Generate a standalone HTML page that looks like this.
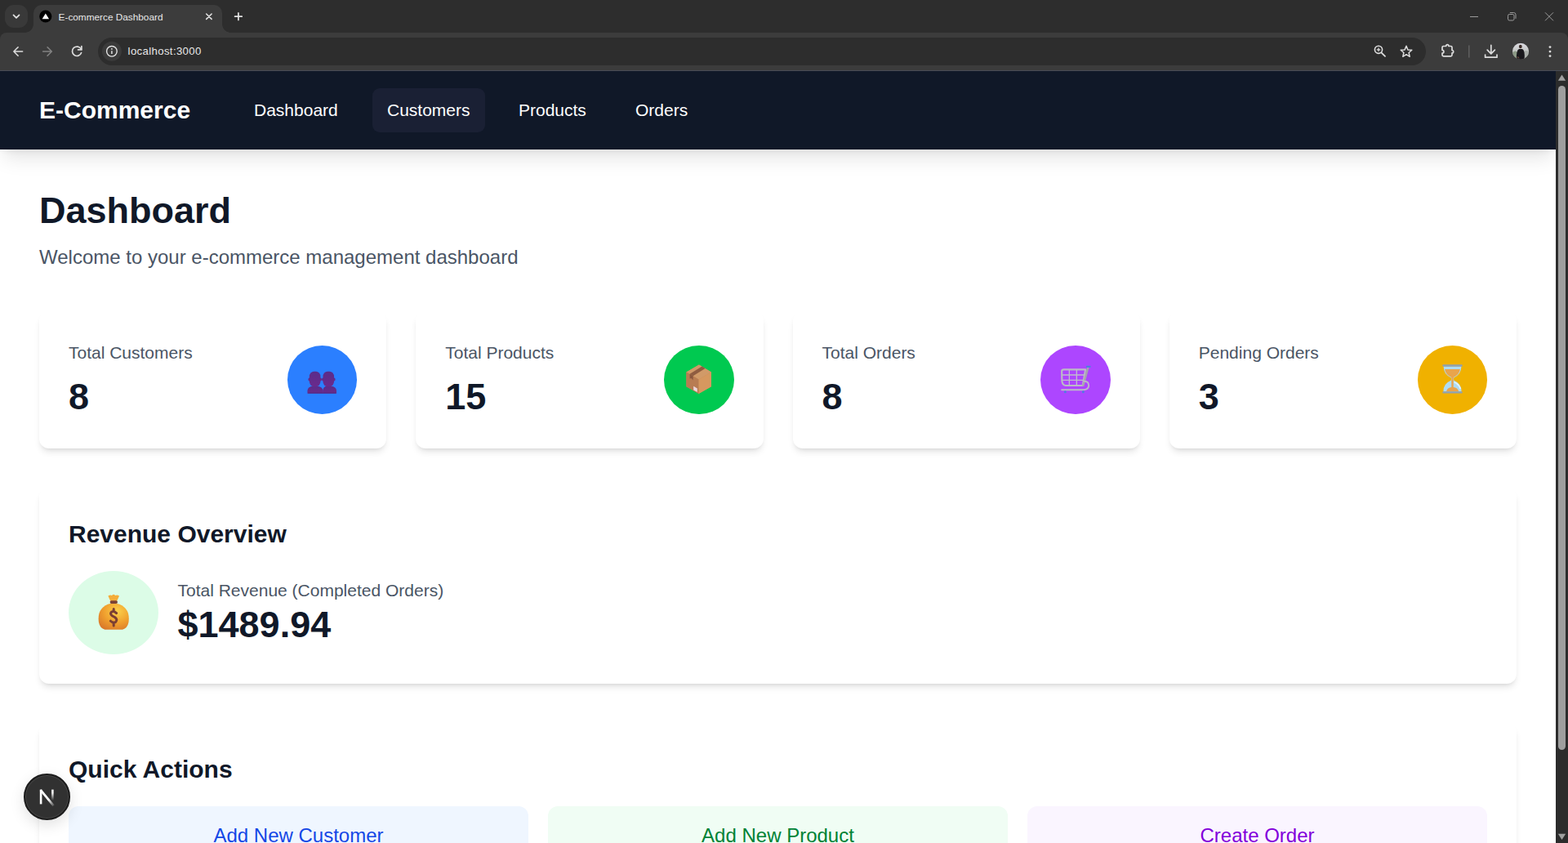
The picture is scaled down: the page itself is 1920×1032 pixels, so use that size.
<!DOCTYPE html>
<html lang="en">
<head>
<meta charset="utf-8">
<title>E-commerce Dashboard</title>
<style>
*{box-sizing:border-box;margin:0;padding:0}
html,body{width:1920px;height:1032px;overflow:hidden;background:#fff}
body{font-family:"Liberation Sans",Arial,Helvetica,sans-serif;color:#101828;position:relative}
/* ---------- browser chrome ---------- */
#chrome{position:absolute;left:0;top:0;width:1920px;height:87px;background:#2d2d2d;font-family:"Liberation Sans","DejaVu Sans",sans-serif}
#tabsearch{position:absolute;left:6px;top:6px;width:28px;height:28px;border-radius:11px;background:#393939}
#tab{position:absolute;left:41px;top:6px;width:231px;height:34px;background:#3c3c3c;border-radius:10px 10px 0 0}
#tab:before,#tab:after{content:"";position:absolute;bottom:0;width:10px;height:10px}
#tab:before{left:-10px;background:radial-gradient(circle at 0 0,transparent 9.5px,#3c3c3c 10px)}
#tab:after{right:-10px;background:radial-gradient(circle at 100% 0,transparent 9.5px,#3c3c3c 10px)}
#tabtitle{position:absolute;left:30.6px;top:6.9px;font-size:11.8px;line-height:16px;color:#e8e8e8;white-space:nowrap}
#toolbar{position:absolute;left:0;top:40px;width:1920px;height:47px;background:#3c3c3c;border-radius:8px 8px 0 0;border-bottom:1px solid #494c56}
#omni{position:absolute;left:120px;top:6px;width:1626px;height:34px;border-radius:17px;background:#2d2d2d}
#url{position:absolute;left:36.6px;top:8.1px;font-size:13.2px;letter-spacing:.36px;line-height:18px;color:#e8e8e8;white-space:nowrap}
.ci{position:absolute}
/* ---------- page ---------- */
#page{position:absolute;left:0;top:87px;width:1905px;height:945px;overflow:hidden;background:#fff}
#nav{position:absolute;left:0;top:0;width:1905px;height:96px;background:#101828;box-shadow:0 15px 22.5px -4.5px rgba(0,0,0,.1),0 6px 9px -6px rgba(0,0,0,.1)}
#brand{position:absolute;left:48px;top:27px;font-size:30px;line-height:42px;font-weight:700;color:#fff;white-space:nowrap}
.nl{position:absolute;top:21px;height:54px;padding:12px 18px;font-size:21px;line-height:30px;color:#fff;border-radius:9px;white-space:nowrap}
h1{position:absolute;left:48px;top:144px;font-size:45px;line-height:54px;font-weight:700;color:#101828}
#sub{position:absolute;left:48px;top:210px;font-size:24px;line-height:36px;color:#4a5565;white-space:nowrap}
.card{position:absolute;background:#fff;border-radius:12px;box-shadow:0 6.5px 8px -2.5px rgba(0,0,0,.11),0 3px 5px -3px rgba(0,0,0,.1)}
.stat{top:294px;width:425.25px;height:168px}
.stat .lb{position:absolute;left:36px;top:36px;font-size:21px;line-height:30px;color:#4a5565;white-space:nowrap}
.stat .vl{position:absolute;left:36px;top:78px;font-size:45px;line-height:54px;font-weight:700;color:#101828}
.stat .ic{position:absolute;right:36px;top:42px;width:85.5px;height:84px;border-radius:50%}
.stat .ic svg{position:absolute;left:0;top:0;width:100%;height:100%}
h2{position:absolute;left:36px;top:36px;font-size:30px;line-height:42px;font-weight:700;color:#101828;white-space:nowrap}
#rev{left:48px;top:510px;width:1809px;height:240px}
#revic{position:absolute;left:36px;top:102px;width:109.5px;height:102px;border-radius:50%;background:#dcfce7}
#revlb{position:absolute;left:169.5px;top:111px;font-size:21px;line-height:30px;color:#4a5565;white-space:nowrap}
#revvl{position:absolute;left:169.5px;top:141px;font-size:45px;line-height:54px;font-weight:700;color:#101828}
#qa{left:48px;top:798px;width:1809px;height:300px}
.btn{position:absolute;top:102px;width:563px;height:84px;border-radius:12px;text-align:center;font-size:24px;line-height:36px;padding-top:18px}
/* scrollbar */
#sb{position:absolute;left:1905px;top:87px;width:15px;height:945px;background:#2c2c2c}
#sbt{position:absolute;left:3px;top:17.8px;width:9px;height:813px;border-radius:5px;background:#9f9f9f}
#nbtn{position:absolute;left:29px;top:947px;width:56.6px;height:56.6px;border-radius:50%;background:#313131;border:2px solid #1c1c1c;box-shadow:inset 0 0 0 1px #444,0 6px 18px rgba(0,0,0,.12)}
</style>
</head>
<body>
<div id="chrome">
  <div id="tabsearch"></div>
  <div id="tab"><div id="tabtitle">E-commerce Dashboard</div></div>
  <div id="toolbar">
    <div id="omni"><div id="url">localhost:3000</div></div>
  </div>

  <svg id="csvg" class="ci" style="left:0;top:0" width="1920" height="87" viewBox="0 0 1920 87" fill="none">
    <!-- tab search chevron -->
    <path d="M16.5 18.3 L20 21.8 L23.5 18.3" stroke="#e3e3e3" stroke-width="1.7" stroke-linecap="round" stroke-linejoin="round"/>
    <!-- favicon -->
    <circle cx="55.8" cy="20" r="7.6" fill="#000"/>
    <path d="M55.8 16.6 L60 23.2 L51.6 23.2 Z" fill="#fff"/>
    <!-- tab close -->
    <path d="M252.7 17 L259.1 23.4 M259.1 17 L252.7 23.4" stroke="#e3e3e3" stroke-width="1.5" stroke-linecap="round"/>
    <!-- new tab -->
    <path d="M287.6 20.2 H296.2 M291.9 15.9 V24.5" stroke="#e3e3e3" stroke-width="1.7" stroke-linecap="round"/>
    <!-- window controls -->
    <path d="M1800 20.5 H1810" stroke="#9b9b9b" stroke-width="1"/>
    <rect x="1846.5" y="17.5" width="7.5" height="7.5" rx="1.8" stroke="#9b9b9b" stroke-width="1"/>
    <path d="M1848.8 15.5 H1853.6 Q1856 15.5 1856 17.9 V22.8" stroke="#9b9b9b" stroke-width="1"/>
    <path d="M1892 15.3 L1902 25.3 M1902 15.3 L1892 25.3" stroke="#9b9b9b" stroke-width="1"/>
    <!-- back -->
    <path d="M27.6 63 H17.2 M22.1 57.8 L16.9 63 L22.1 68.2" stroke="#dcdcdc" stroke-width="1.6" stroke-linecap="round" stroke-linejoin="round"/>
    <!-- forward (disabled) -->
    <path d="M52.6 63 H63 M58.1 57.8 L63.3 63 L58.1 68.2" stroke="#818181" stroke-width="1.6" stroke-linecap="round" stroke-linejoin="round"/>
    <!-- reload -->
    <path d="M99.3 60.2 A5.7 5.7 0 1 0 99.6 64.6" stroke="#dcdcdc" stroke-width="1.7" stroke-linecap="round"/>
    <path d="M99.9 56.6 V60.9 H95.6" stroke="#dcdcdc" stroke-width="1.7" stroke-linecap="round" stroke-linejoin="round"/>
    <!-- site info -->
    <circle cx="136.9" cy="62.8" r="12" fill="#3b3b3b"/>
    <circle cx="136.9" cy="62.8" r="6.3" stroke="#e3e3e3" stroke-width="1.4"/>
    <path d="M136.9 62.3 V66" stroke="#e3e3e3" stroke-width="1.5"/>
    <circle cx="136.9" cy="59.9" r="0.9" fill="#e3e3e3"/>
    <!-- zoom -->
    <circle cx="1688" cy="60.8" r="4.6" stroke="#dcdcdc" stroke-width="1.6"/>
    <path d="M1691.4 64.3 L1696 68.9" stroke="#dcdcdc" stroke-width="1.8" stroke-linecap="round"/>
    <path d="M1685.8 60.8 H1690.2 M1688 58.6 V63" stroke="#dcdcdc" stroke-width="1.3"/>
    <!-- star -->
    <path d="M1722 56.3 L1723.9 60.9 L1728.8 61.3 L1725.1 64.5 L1726.2 69.3 L1722 66.7 L1717.8 69.3 L1718.9 64.5 L1715.2 61.3 L1720.1 60.9 Z" stroke="#dcdcdc" stroke-width="1.5" stroke-linejoin="round"/>
    <!-- extensions -->
    <path d="M1767.6 56.5 H1770.7 A1.6 1.9 0 0 1 1773.9 56.5 H1776.4 Q1778 56.5 1778 58.1 V61.5 A1.7 1.7 0 0 1 1778 64.9 V67.3 Q1778 68.9 1776.4 68.9 H1767.6 Q1766 68.9 1766 67.3 V65.1 A1.9 1.9 0 0 0 1766 61.3 V58.1 Q1766 56.5 1767.6 56.5 Z" stroke="#dcdcdc" stroke-width="1.7" stroke-linejoin="round"/>
    <!-- separator -->
    <path d="M1798.8 56 V70" stroke="#5f5f5f" stroke-width="1.5" stroke-linecap="round"/>
    <!-- download -->
    <path d="M1825.8 55.4 V65.4 M1821.2 61.2 L1825.8 65.8 L1830.4 61.2" stroke="#dcdcdc" stroke-width="1.7" stroke-linecap="round" stroke-linejoin="round"/>
    <path d="M1818.6 67 V70.2 H1833 V67" stroke="#dcdcdc" stroke-width="1.7" stroke-linecap="round" stroke-linejoin="round"/>
    <!-- avatar -->
    <defs>
      <clipPath id="avc"><circle cx="1862" cy="62.7" r="10"/></clipPath>
      <linearGradient id="avg" x1="0" y1="0" x2="0" y2="1"><stop offset="0" stop-color="#dcdbe2"/><stop offset="0.55" stop-color="#c2c5c2"/><stop offset="1" stop-color="#8b917f"/></linearGradient>
    </defs>
    <g clip-path="url(#avc)">
      <rect x="1852" y="52.7" width="20" height="20" fill="url(#avg)"/>
      <path d="M1852 64 Q1856 61 1858 64 V73 H1852 Z" fill="#8c9a86"/>
      <path d="M1866 63 Q1869 61 1872 63.5 V73 H1866 Z" fill="#a9aeaa"/>
      <ellipse cx="1861.8" cy="57" rx="1.9" ry="2.3" fill="#3a2a26"/>
      <path d="M1857 73 Q1856.4 61.4 1860 60 H1864 Q1867.6 61.4 1866.6 73 Z" fill="#19181c"/>
      <path d="M1857.6 70.5 Q1859 69 1860 71.5" stroke="#6b4a40" stroke-width="1.2" fill="none"/>
    </g>
    <!-- menu -->
    <circle cx="1898" cy="57.6" r="1.45" fill="#dcdcdc"/><circle cx="1898" cy="63.1" r="1.45" fill="#dcdcdc"/><circle cx="1898" cy="68.6" r="1.45" fill="#dcdcdc"/>
  </svg>
</div>
<div id="page">
  <h1>Dashboard</h1>
  <div id="sub">Welcome to your e-commerce management dashboard</div>

  <div class="card stat" style="left:48px"><div class="lb">Total Customers</div><div class="vl">8</div><div class="ic" style="background:#2b7fff"><svg viewBox="351.75 423 85.5 84"><defs><linearGradient id="pg" x1="0" y1="0" x2="0" y2="1"><stop offset="0" stop-color="#5a2d8a"/><stop offset="1" stop-color="#6a2a8c"/></linearGradient></defs>
<g fill="url(#pg)">
<path d="M376.2 481.8 V478.6 Q376.2 473.2 383 472.4 H388 Q395 473.2 395.4 478.6 V481.8 Z"/>
<path d="M395 481.8 V478.6 Q395.4 473.2 399.6 472.4 H404.8 Q411.8 473.2 411.8 478.6 V481.8 Z"/>
<rect x="378.6" y="454.8" width="13.6" height="18.4" rx="5.6" ry="6.2"/>
<rect x="395.2" y="454.8" width="13.6" height="18.4" rx="5.6" ry="6.2"/>
<ellipse cx="378.5" cy="464.6" rx="1.3" ry="2"/><ellipse cx="392.4" cy="464.6" rx="1.3" ry="2"/>
<ellipse cx="395.1" cy="464.6" rx="1.3" ry="2"/><ellipse cx="409" cy="464.6" rx="1.3" ry="2"/>
</g>
<path d="M377 481.2 H411" stroke="#4a2a80" stroke-width="1.2" opacity=".6"/>
</svg></div></div>
  <div class="card stat" style="left:509.25px"><div class="lb">Total Products</div><div class="vl">15</div><div class="ic" style="background:#00c950"><svg viewBox="813 423 85.5 84">
<path d="M855.9 446.4 L871 455.4 V473.2 L855.6 482 L840.4 473.2 V455.4 Z" fill="#c58a5a"/>
<path d="M855.9 446.4 L871 455.4 L855.6 464.4 L840.4 455.4 Z" fill="#d19a68"/>
<path d="M840.4 455.4 L855.6 464.4 V482 L840.4 473.2 Z" fill="#b87c52"/>
<path d="M871 455.4 L855.6 464.4 V482 L871 473.2 Z" fill="#d6985f"/>
<path d="M859.6 448.6 L863.6 451 L848.6 460.2 L844.6 457.8 Z" fill="#8f5c40"/>
<path d="M844.6 457.8 L848.6 460.2 V465.4 L846.6 463 L844.6 463.4 Z" fill="#8a573d"/>
<path d="M849.2 472.8 L853.8 475.4 V480 L849.2 477.4 Z" fill="#ecd6dc"/>
</svg></div></div>
  <div class="card stat" style="left:970.5px"><div class="lb">Total Orders</div><div class="vl">8</div><div class="ic" style="background:#ad46ff"><svg viewBox="1274.25 423 85.5 84" fill="none">
<path d="M1300.4 454.6 Q1300.4 452.4 1303 452.4 H1329.4 L1326 472 H1305 Q1301 471.6 1300.6 466 Z" stroke="#bcbac6" stroke-width="2.1" stroke-linejoin="round"/>
<path d="M1301 459 H1328.2 M1301 465.4 H1327 M1309.6 452.6 V471.8 M1318.6 452.6 V471.8" stroke="#c0bccd" stroke-width="1.3"/>
<path d="M1332.6 449.8 L1326.4 472.6" stroke="#a8a6ae" stroke-width="2.4"/>
<path d="M1327 466.4 Q1333.8 466.8 1333.4 472.4 Q1332.8 477.2 1326.6 477.2 H1300.4" stroke="#bcbac6" stroke-width="2" stroke-linecap="round"/>
<path d="M1331 448.9 H1334.8" stroke="#4d7fe0" stroke-width="2.2" stroke-linecap="round"/>
<circle cx="1304.6" cy="479.8" r="1.5" fill="#4d7fe0"/><circle cx="1326.6" cy="479.8" r="1.5" fill="#4d7fe0"/>
</svg></div></div>
  <div class="card stat" style="left:1431.75px"><div class="lb">Pending Orders</div><div class="vl">3</div><div class="ic" style="background:#f0b100"><svg viewBox="1735.5 423 85.5 84">
<path d="M1767.2 448.4 H1788.8 Q1789.4 457.4 1779.6 462.6 V465.4 Q1789.6 470 1789 479.6 H1767 Q1766.4 470 1776.4 465.4 V462.6 Q1766.6 457.4 1767.2 448.4 Z" fill="#aedcf4"/>
<path d="M1768.6 452 H1787.4 Q1786.6 458.4 1779.2 462 V474 Q1784.4 474.6 1785.6 479 H1770.6 Q1771.8 474.6 1776.8 474 V462 Q1769.4 458.4 1768.6 452 Z" fill="#e9a44c"/>
<path d="M1780.6 468 Q1786 470.6 1787.6 475.4" stroke="#e9f6fd" stroke-width="1.6" fill="none" stroke-linecap="round"/>
<rect x="1765.8" y="446.3" width="24.4" height="2.4" rx="1" fill="#8fa1b3"/>
<rect x="1765.8" y="479.2" width="24.4" height="2.4" rx="1" fill="#8fa1b3"/>
</svg></div></div>

  <div class="card" id="rev">
    <h2>Revenue Overview</h2>
    <div id="revic"><svg viewBox="84 699 109.5 102" style="position:absolute;left:0;top:0;width:100%;height:100%"><defs><radialGradient id="mg" cx="0.62" cy="0.3" r="0.8"><stop offset="0" stop-color="#fbd14b"/><stop offset="0.55" stop-color="#f0a02e"/><stop offset="1" stop-color="#d9772a"/></radialGradient></defs>
<path d="M132.4 729.6 Q135 727.6 137 729 Q139 726.4 141.2 729 Q143.4 727.6 146 729.6 Q144.6 733 143 736 H135.4 Q133.8 733 132.4 729.6 Z" fill="#f4ad3a"/>
<path d="M135.6 738.8 H142.8 Q157.8 742.6 157.8 757.4 Q157.8 768.6 150 770.8 H128.4 Q120.6 768.6 120.6 757.4 Q120.6 742.6 135.6 738.8 Z" fill="url(#mg)"/>
<rect x="134.6" y="735.2" width="9.4" height="3.8" rx="1.9" fill="#7b4234"/>
<path d="M142.6 750.6 Q139.6 747.4 136.8 749 Q134 751.4 137.6 754 L140.8 755.8 Q144.4 758.4 141.6 761.4 Q138.6 763.4 135.4 760.2 M139.2 745.4 V748.4 M139.2 762 V766" stroke="#7b3f33" stroke-width="3" fill="none" stroke-linecap="round" stroke-linejoin="round"/>
</svg></div>
    <div id="revlb">Total Revenue (Completed Orders)</div>
    <div id="revvl">$1489.94</div>
  </div>

  <div class="card" id="qa">
    <h2>Quick Actions</h2>
    <div class="btn" style="left:36px;background:#eff6ff;color:#1447e6">Add New Customer</div>
    <div class="btn" style="left:623px;background:#f0fdf4;color:#008236">Add New Product</div>
    <div class="btn" style="left:1210px;background:#faf5ff;color:#8200db">Create Order</div>
  </div>

  <div id="nav">
    <div id="brand">E-Commerce</div>
    <div class="nl" style="left:293px">Dashboard</div>
    <div class="nl" style="left:456px;background:#1a2034">Customers</div>
    <div class="nl" style="left:617px">Products</div>
    <div class="nl" style="left:760px">Orders</div>
  </div>
</div>
<div id="sb"><div id="sbt"></div><svg width="15" height="945" viewBox="1905 87 15 945" style="position:absolute;left:0;top:0"><path d="M1912.5 91.4 L1917.2 98.8 H1907.8 Z" fill="#9f9f9f"/><path d="M1912.5 1028 L1917.2 1020.8 H1907.8 Z" fill="#9f9f9f"/></svg></div>
<div id="nbtn"><svg viewBox="28.6 946.6 56.6 56.6" width="56.6" height="56.6" style="position:absolute;left:-2px;top:-2px"><defs><linearGradient id="ng1" gradientUnits="userSpaceOnUse" x1="0" y1="966" x2="0" y2="979.5"><stop offset="0.3" stop-color="#fff"/><stop offset="1" stop-color="#fff" stop-opacity="0"/></linearGradient><linearGradient id="ng2" gradientUnits="userSpaceOnUse" x1="49" y1="967" x2="66" y2="986"><stop offset="0.6" stop-color="#fff"/><stop offset="1" stop-color="#fff" stop-opacity="0.1"/></linearGradient></defs>
<path d="M49.7 984 V966.2" stroke="#fff" stroke-width="2.6"/>
<path d="M49.3 966.8 L65.2 986" stroke="url(#ng2)" stroke-width="2.8"/>
<path d="M64 966.2 V979.5" stroke="url(#ng1)" stroke-width="2.5"/>
</svg></div>
</body>
</html>
